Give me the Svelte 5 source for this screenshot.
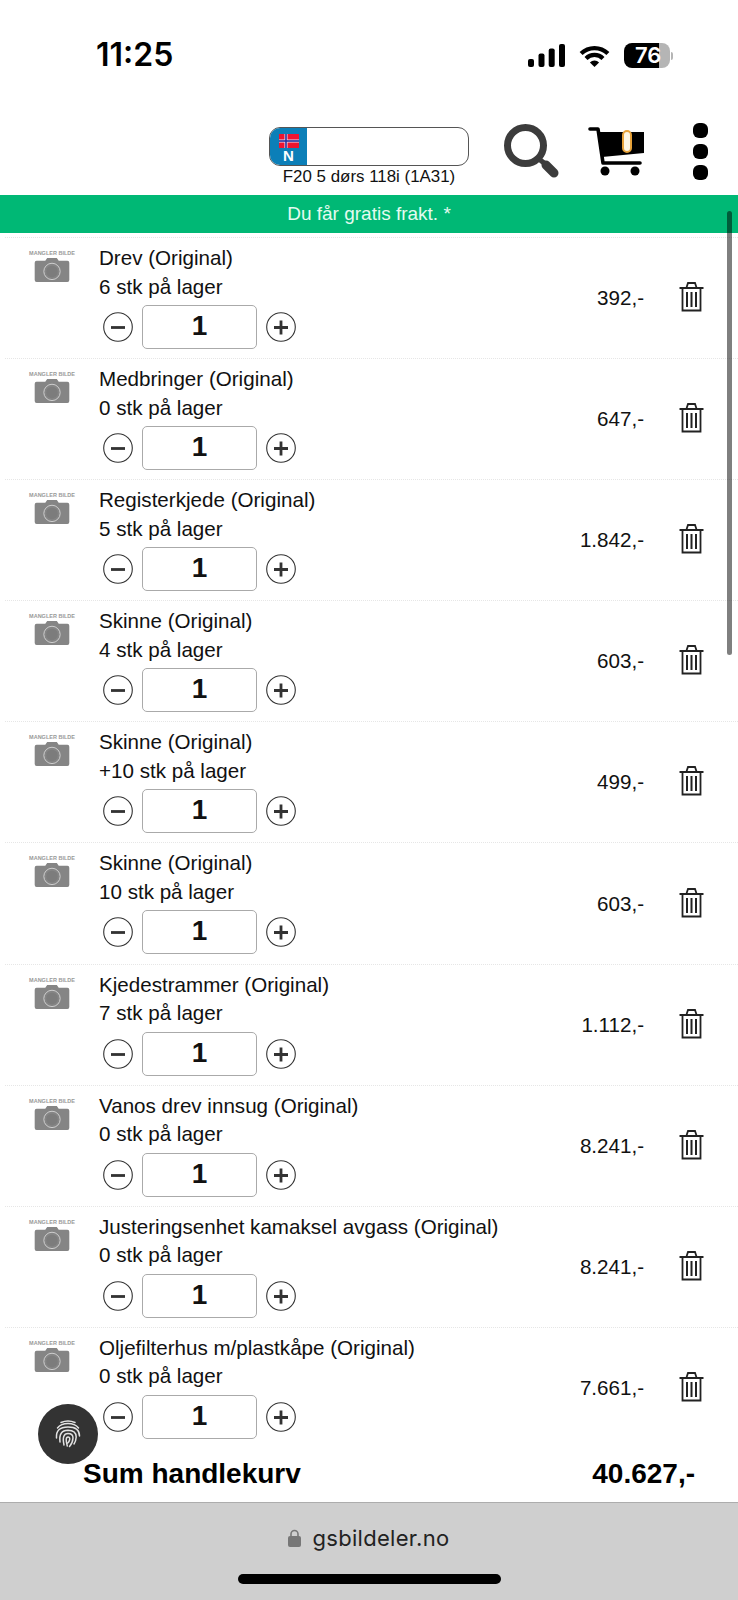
<script lang="ts">
  const items = [
    { name: 'Drev (Original)', stock: '6 stk på lager', price: '392,-' },
    { name: 'Medbringer (Original)', stock: '0 stk på lager', price: '647,-' },
    { name: 'Registerkjede (Original)', stock: '5 stk på lager', price: '1.842,-' },
    { name: 'Skinne (Original)', stock: '4 stk på lager', price: '603,-' },
    { name: 'Skinne (Original)', stock: '+10 stk på lager', price: '499,-' },
    { name: 'Skinne (Original)', stock: '10 stk på lager', price: '603,-' },
    { name: 'Kjedestrammer (Original)', stock: '7 stk på lager', price: '1.112,-' },
    { name: 'Vanos drev innsug (Original)', stock: '0 stk på lager', price: '8.241,-' },
    { name: 'Justeringsenhet kamaksel avgass (Original)', stock: '0 stk på lager', price: '8.241,-' },
    { name: 'Oljefilterhus m/plastkåpe (Original)', stock: '0 stk på lager', price: '7.661,-' }
  ];
</script>

<div class="page">
  <div class="status">
    <span class="time">11:25</span>
    <div class="status-icons">
      <svg class="signal" width="37" height="23" viewBox="0 0 37 23">
        <rect x="0" y="15" width="6" height="8" rx="2" />
        <rect x="10.5" y="9.5" width="6" height="13.5" rx="2" />
        <rect x="20.7" y="4.5" width="6" height="18.5" rx="2" />
        <rect x="31" y="0" width="6" height="23" rx="2" />
      </svg>
      <svg class="wifi" width="31" height="23" viewBox="0 0 31 23">
        <path d="M2.1 9.6 A19 19 0 0 1 28.9 9.6" fill="none" stroke="#000" stroke-width="4.2" />
        <path d="M7 14.5 A12 12 0 0 1 24 14.5" fill="none" stroke="#000" stroke-width="4.2" />
        <path d="M10.9 18.4 A6.5 6.5 0 0 1 20.1 18.4 L15.5 23 Z" />
      </svg>
      <div class="battery">
        <div class="battery-body"><span>76</span></div>
        <div class="battery-tip"></div>
      </div>
    </div>
  </div>

  <header class="top">
    <div class="car">
      <div class="plate">
        <div class="plate-blue">
          <svg width="20" height="14" viewBox="0 0 20 14">
            <rect width="20" height="14" fill="#f0142f" />
            <rect x="5.5" width="3" height="14" fill="#e6e6ff" />
            <rect y="5.5" width="20" height="3" fill="#e6e6ff" />
            <rect x="6.2" width="1.6" height="14" fill="#2a2f9a" />
            <rect y="6.2" width="20" height="1.6" fill="#2a2f9a" />
          </svg>
          <b>N</b>
        </div>
      </div>
      <div class="car-name">F20 5 dørs 118i (1A31)</div>
    </div>
    <svg class="search" width="56" height="55" viewBox="0 0 56 55">
      <circle cx="21.5" cy="21.5" r="18" fill="none" stroke="#3c3c3c" stroke-width="7" />
      <path d="M35 35 L40 39" stroke="#3c3c3c" stroke-width="5" />
      <path d="M42 41 L50 49" stroke="#3c3c3c" stroke-width="9" stroke-linecap="round" />
    </svg>
    <svg class="cart" width="58" height="52" viewBox="0 0 58 52">
      <path d="M2 4 H10 L15 38 H52" fill="none" stroke="#000" stroke-width="3.6" stroke-linecap="round" stroke-linejoin="round" />
      <path d="M10 7 H56 V28 L14 32 Z" />
      <circle cx="17" cy="46" r="4.5" />
      <circle cx="47" cy="46" r="4.5" />
      <rect x="35" y="6" width="8" height="21" rx="4" fill="#fdf6e3" stroke="#e8a33a" stroke-width="2" />
    </svg>
    <div class="dots"><i></i><i></i><i></i></div>
  </header>

  <div class="banner">Du får gratis frakt. *</div>

  <div class="list">
    {#each items as item}
      <div class="row">
        <div class="thumb">
          <span class="thumb-label">MANGLER BILDE</span>
          <svg width="36" height="25" viewBox="0 0 36 26">
            <path d="M2 4 H11 L13 1 H23 L25 4 H34 Q36 4 36 6 V24 Q36 26 34 26 H2 Q0 26 0 24 V6 Q0 4 2 4 Z" fill="#858585" />
            <circle cx="18" cy="15" r="8.5" fill="none" stroke="#d0d0d0" stroke-width="1" />
            <circle cx="18" cy="15" r="6" fill="#7c7c7c" />
          </svg>
        </div>
        <div class="info">
          <div class="line">{item.name}</div>
          <div class="line">{item.stock}</div>
          <div class="qty">
            <button type="button" class="round"><svg width="30" height="30" viewBox="0 0 30 30"><circle cx="15" cy="15" r="14.3" fill="none" stroke="#333" stroke-width="1.1" /><path d="M8 15.5 H22" stroke="#333" stroke-width="2.8" /></svg></button>
            <div class="qty-box">1</div>
            <button type="button" class="round"><svg width="30" height="30" viewBox="0 0 30 30"><circle cx="15" cy="15" r="14.3" fill="none" stroke="#333" stroke-width="1.1" /><path d="M8 15.5 H22 M15 8.5 V22.5" stroke="#333" stroke-width="2.8" /></svg></button>
          </div>
        </div>
        <div class="price">{item.price}</div>
        <svg class="trash" width="25" height="31" viewBox="0 0 25 31" fill="none" stroke="#222">
          <path d="M0.5 7 H24.5" stroke-width="2" />
          <path d="M7.5 6.5 L9 2 H16 L17.5 6.5" stroke-width="1.8" />
          <path d="M3.5 7 V29.5 H21.5 V7" stroke-width="1.8" />
          <path d="M8 11 V26 M12.5 11 V26 M17 11 V26" stroke-width="2" />
        </svg>
      </div>
    {/each}
  </div>

  <div class="sum">
    <span>Sum handlekurv</span>
    <span>40.627,-</span>
  </div>

  <div class="browser">
    <div class="url">
      <svg width="13" height="18" viewBox="0 0 13 18">
        <path d="M3 8 V5 A3.5 3.5 0 0 1 10 5 V8" fill="none" stroke="#777" stroke-width="1.6" />
        <rect x="0" y="7" width="13" height="11" rx="2" fill="#777" />
      </svg>
      <span>gsbildeler.no</span>
    </div>
    <div class="home-bar"></div>
  </div>

  <div class="scrollbar"></div>

  <div class="finger">
    <svg width="26" height="28" viewBox="0 0 26 28" fill="none" stroke="#e2e2e2" stroke-width="1.5" stroke-linecap="round">
      <path d="M6 2.5 Q13 -0.5 20 2.5" />
      <path d="M2.5 8 Q6 3.5 13 3.5 Q20 3.5 23.5 8" />
      <path d="M1.5 18 Q0.5 7 13 7 Q24.5 7 24.5 16" />
      <path d="M5 22 Q3.5 10.3 13 10.3 Q21.2 10.5 21.2 17 Q21 21 19 24" />
      <path d="M9 25 Q6.5 13.6 13 13.6 Q18 13.6 18 18 Q17.7 23 14.5 26.5" />
      <path d="M12.3 26 Q9.8 17 13 17 Q15 17 14.7 19.5 Q14.2 22 12.8 23" />
    </svg>
  </div>
</div>

<style>
  :global(body) {
    margin: 0;
    background: #fff;
  }

  .page {
    position: relative;
    width: 738px;
    height: 1600px;
    overflow: hidden;
    display: flex;
    flex-direction: column;
    background: #fff;
    font-family: "Liberation Sans", Arial, sans-serif;
    color: #111;
  }

  .status {
    height: 110px;
    display: flex;
    justify-content: space-between;
    align-items: flex-start;
    padding: 38px 65px 0 96px;
    box-sizing: border-box;
  }

  .time {
    font-family: Inter, sans-serif;
    font-size: 32px;
    font-weight: 600;
    line-height: 34px;
    color: #000;
  }

  .status-icons {
    display: flex;
    align-items: center;
    gap: 14px;
    padding-top: 5px;
  }

  .status-icons svg {
    display: block;
  }

  .battery {
    display: flex;
    align-items: center;
    gap: 1px;
  }

  .battery-body {
    width: 46px;
    height: 25px;
    border-radius: 8px;
    background: linear-gradient(90deg, #000 76%, #b5b5b5 76%);
    color: #fff;
    font-family: Inter, sans-serif;
    font-weight: 600;
    font-size: 22px;
    line-height: 25px;
    padding-left: 11px;
    box-sizing: border-box;
    white-space: nowrap;
  }

  .battery-tip {
    width: 2px;
    height: 8px;
    background: #b5b5b5;
    border-radius: 0 2px 2px 0;
  }

  .top {
    height: 85px;
    display: flex;
    align-items: flex-start;
    padding-left: 269px;
    box-sizing: border-box;
  }

  .car {
    width: 200px;
    margin-top: 17px;
  }

  .plate {
    height: 39px;
    border: 1.5px solid #555;
    border-radius: 11px;
    box-sizing: border-box;
    overflow: hidden;
  }

  .plate-blue {
    width: 37px;
    height: 100%;
    background: #0c7fb8;
    display: flex;
    flex-direction: column;
    align-items: center;
    padding-top: 5.5px;
    box-sizing: border-box;
    color: #fff;
  }

  .plate-blue svg {
    display: block;
    flex: none;
  }

  .plate-blue b {
    font-size: 15px;
    line-height: 15px;
  }

  .car-name {
    font-size: 16.9px;
    line-height: 20px;
    margin-top: 1px;
    text-align: center;
    white-space: nowrap;
  }

  .search {
    margin: 14px 0 0 35px;
  }

  .cart {
    margin: 15px 0 0 28px;
  }

  .dots {
    margin: 13px 0 0 47px;
    display: flex;
    flex-direction: column;
    gap: 6px;
  }

  .dots i {
    display: block;
    width: 15px;
    height: 15px;
    border-radius: 6px;
    background: #000;
  }

  .banner {
    height: 38px;
    background: #00b875;
    color: #e4fbf0;
    font-size: 19px;
    line-height: 38px;
    text-align: center;
  }

  .list {
    margin-top: 4px;
  }

  .row {
    height: 121.1px;
    box-sizing: border-box;
    margin-left: 5px;
    border-top: 1px dotted #e6e6e6;
    padding-left: 24px;
    display: flex;
    align-items: center;
    position: relative;
  }

  .thumb {
    width: 70px;
    align-self: flex-start;
    padding-top: 11px;
    display: flex;
    flex-direction: column;
    align-items: flex-start;
  }

  .thumb-label {
    font-size: 5.5px;
    font-weight: 700;
    color: #999;
    line-height: 8px;
    white-space: nowrap;
    width: 46px;
    text-align: center;
  }

  .thumb svg {
    margin: 0 0 0 5px;
  }

  .info {
    align-self: flex-start;
    padding-top: 6px;
    flex: 1;
    min-width: 0;
  }

  .line {
    font-size: 20.6px;
    line-height: 28.5px;
    white-space: nowrap;
  }

  .qty {
    display: flex;
    align-items: center;
    margin-top: 4px;
    padding-left: 4px;
  }

  .round {
    width: 30px;
    height: 30px;
    padding: 0;
    margin: 0;
    border: none;
    background: none;
    display: block;
  }

  .round svg {
    display: block;
  }

  .qty-box {
    width: 115px;
    height: 44px;
    margin: 0 9px;
    border: 1.5px solid #aaa;
    border-radius: 5px;
    box-sizing: border-box;
    font-size: 28px;
    font-weight: 700;
    line-height: 39px;
    text-align: center;
  }

  .price {
    font-size: 20.6px;
    width: 150px;
    text-align: right;
    white-space: nowrap;
    margin-right: 35px;
  }

  .trash {
    margin: 0 34px 3px 0;
    flex: none;
  }

  .sum {
    height: 54px;
    display: flex;
    justify-content: space-between;
    align-items: center;
    padding: 0 43px 2px 83px;
    box-sizing: border-box;
    font-size: 28px;
    font-weight: 700;
    color: #000;
  }

  .browser {
    flex: 1;
    background: #cfcfcf;
    border-top: 1.5px solid #adadad;
    display: flex;
    flex-direction: column;
    align-items: center;
  }

  .url {
    display: flex;
    align-items: center;
    gap: 11px;
    margin-top: 20px;
    height: 30px;
    font-family: Inter, sans-serif;
    font-size: 22px;
    letter-spacing: 0.3px;
    color: #222;
  }

  .home-bar {
    width: 263px;
    height: 10px;
    margin-top: 21px;
    border-radius: 5px;
    background: #000;
  }

  .scrollbar {
    position: absolute;
    left: 727px;
    top: 211px;
    width: 5px;
    height: 444px;
    border-radius: 3px;
    background: rgba(0, 0, 0, 0.5);
  }

  .finger {
    position: absolute;
    left: 38px;
    top: 1404px;
    width: 60px;
    height: 60px;
    border-radius: 50%;
    background: #333;
    display: flex;
    align-items: center;
    justify-content: center;
  }
</style>
